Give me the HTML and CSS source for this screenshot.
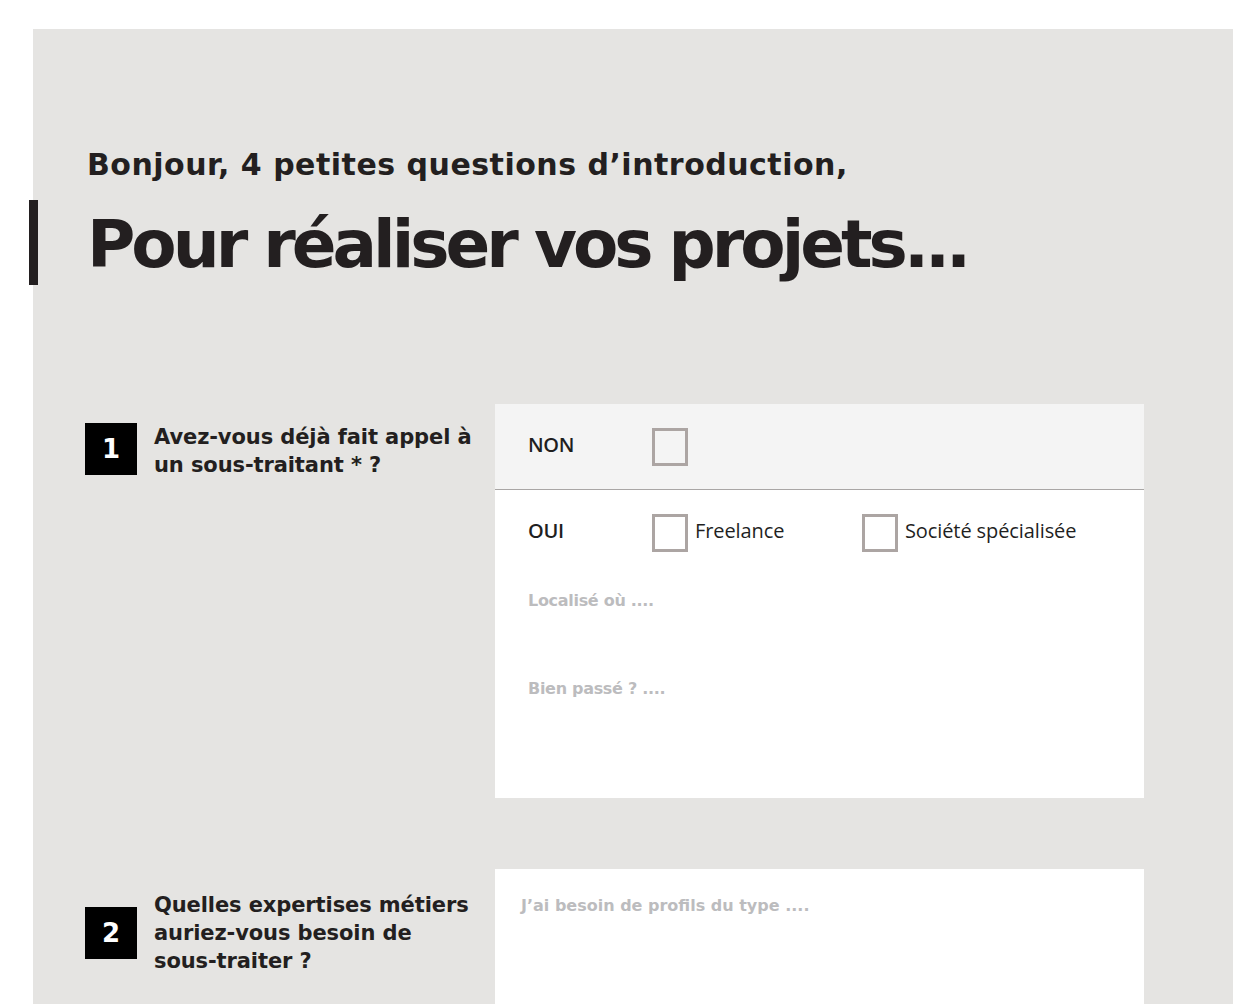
FILE: index.html
```html
<!DOCTYPE html>
<html lang="fr">
<head>
<meta charset="utf-8">
<title>Questions d'introduction</title>
<link rel="stylesheet" href="styles.css">
</head>
<body>
<main class="panel">
  <header class="intro">
    <p class="intro-sub">Bonjour, 4 petites questions d’introduction,</p>
    <h1 class="intro-title">Pour réaliser vos projets...</h1>
  </header>

  <section class="question q1">
    <div class="q-label">
      <span class="q-num">1</span>
      <p class="q-text">Avez-vous déjà fait appel à un sous-traitant * ?</p>
    </div>
    <div class="card">
      <div class="choice choice-no">
        <span class="choice-name">NON</span>
        <span class="box"></span>
      </div>
      <div class="choice choice-yes">
        <span class="choice-name">OUI</span>
        <span class="option"><span class="box"></span><span class="opt-text">Freelance</span></span>
        <span class="option"><span class="box"></span><span class="opt-text">Société spécialisée</span></span>
      </div>
      <div class="field field-where">Localisé où ....</div>
      <div class="field field-how">Bien passé ? ....</div>
    </div>
  </section>

  <section class="question q2">
    <div class="q-label">
      <span class="q-num">2</span>
      <p class="q-text">Quelles expertises métiers auriez-vous besoin de <span class="nowrap">sous-traiter ?</span></p>
    </div>
    <div class="card card-text">
      <div class="field field-profiles">J’ai besoin de profils du type ....</div>
    </div>
  </section>
</main>
</body>
</html>
```

FILE: styles.css
```css
html, body {
  margin: 0;
  padding: 0;
  background: #ffffff;
}

body {
  font-family: "DejaVu Sans", sans-serif;
  color: #231f20;
}

.panel {
  margin: 29px 26px 0 33px;
  background: #e5e4e2;
  height: 975px;
  padding: 0 89px 0 52px;
  box-sizing: border-box;
}

.intro {
  padding-top: 116px;
  padding-left: 2px;
}

.intro-sub {
  margin: 0;
  font-size: 30px;
  font-weight: 700;
  line-height: 40px;
  letter-spacing: 0.5px;
  word-spacing: 0;
}

.intro-title {
  margin: 0;
  margin-top: 15px;
  font-size: 66px;
  font-weight: 700;
  line-height: 90px;
  letter-spacing: -4px;
  position: relative;
}

.intro-title::before {
  content: "";
  position: absolute;
  left: -58px;
  top: 0;
  width: 9px;
  height: 85px;
  background: #231f20;
}

.question {
  display: flex;
  align-items: flex-start;
}

.q1 {
  margin-top: 114px;
}

.q2 {
  margin-top: 71px;
}

.q-label {
  width: 410px;
  flex: none;
  display: flex;
  align-items: center;
  gap: 17px;
}

.q1 .q-label {
  padding-top: 14px;
}

.q1 .q-text {
  padding-top: 5px;
}

.q2 .q-label {
  padding-top: 22px;
}

.q-num {
  flex: none;
  width: 52px;
  height: 52px;
  background: #000000;
  color: #ffffff;
  font-size: 26px;
  font-weight: 700;
  display: flex;
  align-items: center;
  justify-content: center;
}

.q-text {
  margin: 0;
  font-size: 21px;
  font-weight: 700;
  line-height: 28px;
  letter-spacing: -0.1px;
  width: 322px;
}

.nowrap {
  white-space: nowrap;
}

.card {
  width: 649px;
  background: #ffffff;
  flex: none;
}

.choice {
  display: flex;
  align-items: center;
  padding-left: 33px;
  font-family: "Open Sans", sans-serif;
  font-size: 20px;
}

.choice-no {
  height: 86px;
  background: #f4f4f4;
  border-bottom: 1px solid #a9a6a5;
  box-sizing: border-box;
}

.choice-no .choice-name {
  margin-top: -4px;
}

.choice-yes {
  height: 80px;
}

.choice-name {
  width: 124px;
  font-weight: 600;
  color: #1f1f1f;
  letter-spacing: -0.3px;
}

.box {
  width: 30px;
  height: 32px;
  border: 3px solid #aca5a3;
  background: transparent;
  flex: none;
}

.choice-yes .box {
  margin-top: 5px;
}

.option {
  display: flex;
  align-items: center;
  width: 210px;
  flex: none;
  white-space: nowrap;
}

.opt-text {
  margin-left: 7px;
  color: #1f1f1f;
  letter-spacing: -0.1px;
}

.field {
  padding-left: 33px;
  font-size: 16px;
  font-weight: 700;
  color: #bcbcbe;
  letter-spacing: -0.3px;
  line-height: 20px;
}

.field-where {
  padding-top: 21px;
  height: 109px;
  box-sizing: border-box;
}

.field-how {
  height: 119px;
}

.card-text {
  height: 135px;
}

.field-profiles {
  padding-left: 26px;
  padding-top: 27px;
  letter-spacing: 0;
}
```
